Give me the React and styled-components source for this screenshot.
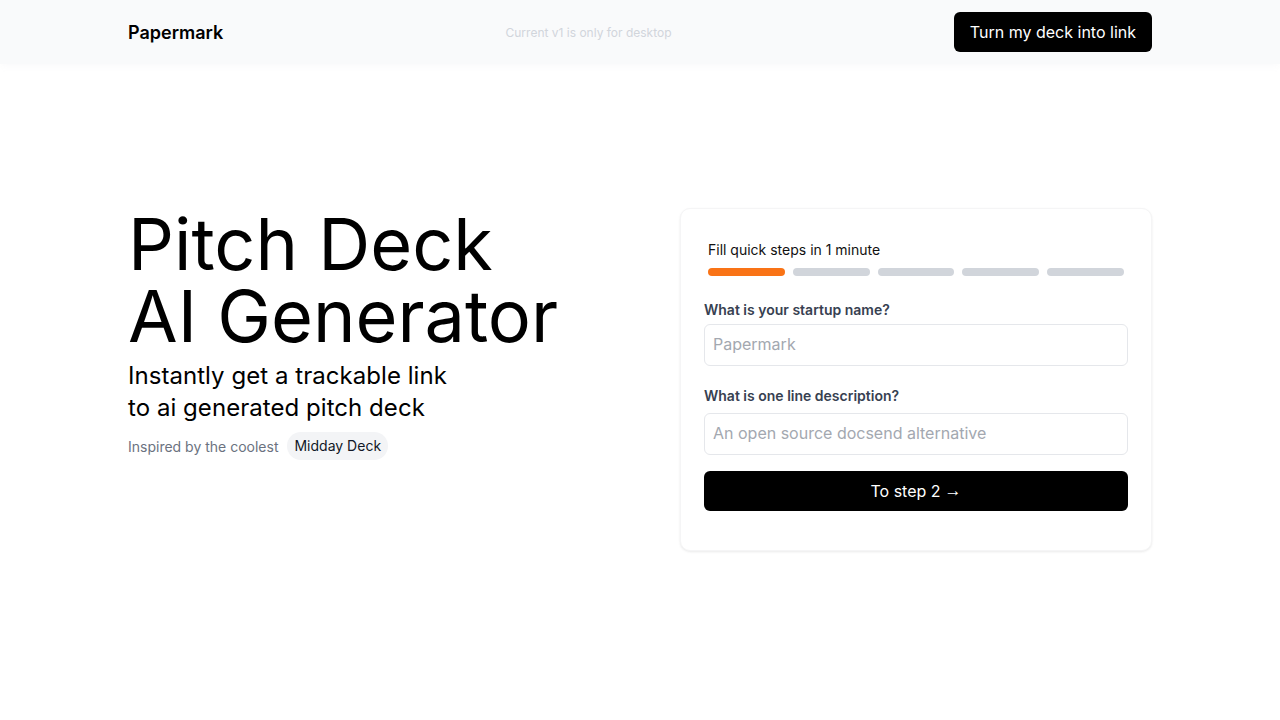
import React from "react";
import styled, { createGlobalStyle } from "styled-components";

const Global = createGlobalStyle`
  * { box-sizing: border-box; }
  html, body { margin: 0; padding: 0; background: #ffffff; }
  body { font-family: Inter, "Noto Sans", sans-serif; color: #000; -webkit-font-smoothing: antialiased; }
`;

const Page = styled.div`
  min-height: 720px;
  background: #ffffff;
`;

const Header = styled.header`
  height: 64px;
  background: #f9fafb;
  box-shadow: 0 2px 6px rgba(249, 250, 251, 0.9);
`;

const HeaderInner = styled.div`
  width: 1024px;
  height: 100%;
  margin: 0 auto;
  display: flex;
  align-items: center;
  justify-content: space-between;
`;

const Brand = styled.div`
  font-size: 18px;
  font-weight: 600;
  color: #000;
`;

const Notice = styled.div`
  font-size: 12px;
  color: #d1d5db;
`;

const DarkButton = styled.button`
  font-family: inherit;
  border: none;
  background: #000;
  color: #fff;
  border-radius: 6px;
  font-size: 16px;
  font-weight: 400;
  height: 40px;
  padding: 0 16px;
  width: ${(p) => (p.$full ? "100%" : "auto")};
  cursor: pointer;
  display: flex;
  align-items: center;
  justify-content: center;
  gap: 4px;
`;

const Arrow = styled.span`
  font-family: "Liberation Sans", Arial, sans-serif;
  font-size: 17px;
`;

const Main = styled.main`
  width: 1024px;
  margin: 0 auto;
  padding-top: 144px;
  display: flex;
  justify-content: space-between;
  align-items: flex-start;
`;

const Hero = styled.div`
  display: flex;
  flex-direction: column;
`;

const Title = styled.h1`
  margin: 0;
  font-size: 72px;
  line-height: 72px;
  font-weight: 400;
  letter-spacing: 0;
  color: #000;
`;

const Subtitle = styled.p`
  margin: 8px 0 0;
  font-size: 24px;
  line-height: 32px;
  font-weight: 400;
  letter-spacing: 0.05px;
  color: #000;
`;

const InspiredRow = styled.div`
  margin-top: 8px;
  display: flex;
  align-items: center;
  gap: 9px;
  font-size: 14px;
  color: #6b7280;
`;

const Pill = styled.span`
  background: #f3f4f6;
  color: #111827;
  border-radius: 9999px;
  padding: 5px 7px;
  font-size: 14px;
  line-height: 18px;
`;

const Card = styled.div`
  width: 472px;
  background: #fff;
  border-radius: 10px;
  border: 1px solid #f5f5f6;
  box-shadow: 0 1px 3px rgba(0, 0, 0, 0.06), 0 1px 2px rgba(0, 0, 0, 0.03);
  padding: 23px 23px 39px;
`;

const Progress = styled.div`
  padding: 8px 4px;
`;

const ProgressTitle = styled.div`
  font-size: 14px;
  line-height: 20px;
  color: #111;
`;

const Bars = styled.div`
  margin-top: 8px;
  display: flex;
  gap: 8px;
`;

const Bar = styled.div`
  flex: 1;
  height: 8px;
  border-radius: 9999px;
  background: ${(p) => (p.$active ? "#f97316" : "#d1d5db")};
`;

const Field = styled.div`
  margin-top: ${(p) => p.$mt}px;
  display: flex;
  flex-direction: column;
  gap: ${(p) => p.$gap}px;
`;

const Label = styled.label`
  font-size: 14px;
  line-height: 24px;
  font-weight: 600;
  color: #374151;
`;

const Input = styled.input`
  font-family: inherit;
  height: 42px;
  border: 1px solid #e5e7eb;
  border-radius: 6px;
  padding: 0 8px 2px;
  font-size: 16px;
  color: #111;
  outline: none;
  &::placeholder { color: #a3a8b0; }
`;

const ButtonWrap = styled.div`
  margin-top: 16px;
`;

export default function App() {
  return (
    <Page>
      <Global />
      <Header>
        <HeaderInner>
          <Brand>Papermark</Brand>
          <Notice>Current v1 is only for desktop</Notice>
          <DarkButton>Turn my deck into link</DarkButton>
        </HeaderInner>
      </Header>
      <Main>
        <Hero>
          <Title>
            Pitch Deck
            <br />
            AI Generator
          </Title>
          <Subtitle>
            Instantly get a trackable link
            <br />
            to ai generated pitch deck
          </Subtitle>
          <InspiredRow>
            <span>Inspired by the coolest</span>
            <Pill>Midday Deck</Pill>
          </InspiredRow>
        </Hero>
        <Card>
          <Progress>
            <ProgressTitle>Fill quick steps in 1 minute</ProgressTitle>
            <Bars>
              <Bar $active />
              <Bar />
              <Bar />
              <Bar />
              <Bar />
            </Bars>
          </Progress>
          <Field $mt={14} $gap={2}>
            <Label>What is your startup name?</Label>
            <Input placeholder="Papermark" />
          </Field>
          <Field $mt={18} $gap={5}>
            <Label>What is one line description?</Label>
            <Input placeholder="An open source docsend alternative" />
          </Field>
          <ButtonWrap>
            <DarkButton $full>
              To step 2<Arrow>→</Arrow>
            </DarkButton>
          </ButtonWrap>
        </Card>
      </Main>
    </Page>
  );
}
